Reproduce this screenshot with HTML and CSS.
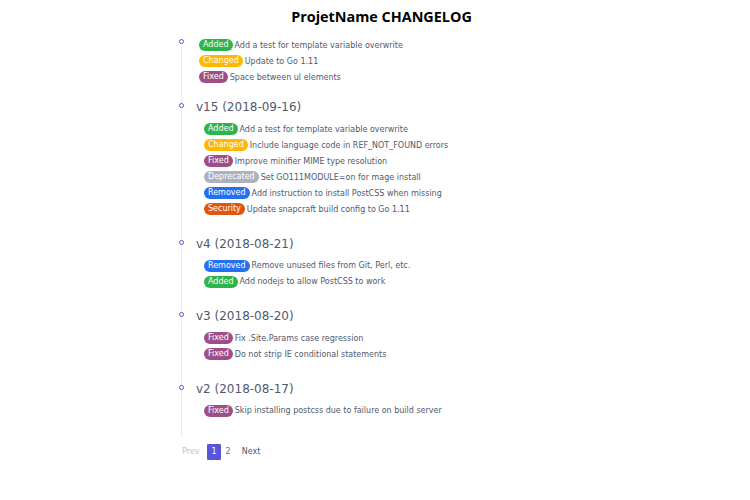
FILE: index.html
```html
<!DOCTYPE html>
<html lang="en">
<head>
<meta charset="utf-8">
<title>ProjetName CHANGELOG</title>
<link rel="stylesheet" href="styles.css">
</head>
<body>
<h1 class="title">ProjetName CHANGELOG</h1>
<div class="timeline">
  <section class="release">
    <ul class="changes changes-top">
      <li class="change"><span class="badge added">Added</span><span>Add a test for template variable overwrite</span></li>
      <li class="change"><span class="badge changed">Changed</span><span>Update to Go 1.11</span></li>
      <li class="change"><span class="badge fixed">Fixed</span><span>Space between ul elements</span></li>
    </ul>
  </section>
  <section class="release release-headed">
    <h2 class="version">v15 (2018-09-16)</h2>
    <ul class="changes">
      <li class="change"><span class="badge added">Added</span><span>Add a test for template variable overwrite</span></li>
      <li class="change"><span class="badge changed">Changed</span><span>Include language code in REF_NOT_FOUND errors</span></li>
      <li class="change"><span class="badge fixed">Fixed</span><span>Improve minifier MIME type resolution</span></li>
      <li class="change"><span class="badge deprecated">Deprecated</span><span>Set GO111MODULE=on for mage install</span></li>
      <li class="change"><span class="badge removed">Removed</span><span>Add instruction to install PostCSS when missing</span></li>
      <li class="change"><span class="badge security">Security</span><span>Update snapcraft build config to Go 1.11</span></li>
    </ul>
  </section>
  <section class="release release-headed">
    <h2 class="version">v4 (2018-08-21)</h2>
    <ul class="changes">
      <li class="change"><span class="badge removed">Removed</span><span>Remove unused files from Git, Perl, etc.</span></li>
      <li class="change"><span class="badge added">Added</span><span>Add nodejs to allow PostCSS to work</span></li>
    </ul>
  </section>
  <section class="release release-headed">
    <h2 class="version">v3 (2018-08-20)</h2>
    <ul class="changes">
      <li class="change"><span class="badge fixed">Fixed</span><span>Fix .Site.Params case regression</span></li>
      <li class="change"><span class="badge fixed">Fixed</span><span>Do not strip IE conditional statements</span></li>
    </ul>
  </section>
  <section class="release release-headed release-last">
    <h2 class="version">v2 (2018-08-17)</h2>
    <ul class="changes">
      <li class="change"><span class="badge fixed">Fixed</span><span>Skip installing postcss due to failure on build server</span></li>
    </ul>
  </section>
</div>
<nav class="pagination">
  <span class="page-link disabled">Prev</span>
  <a class="page-link active">1</a>
  <a class="page-link number">2</a>
  <a class="page-link next">Next</a>
</nav>
</body>
</html>
```
FILE: styles.css
```css
html, body {
  background: #ffffff;
}
body {
  margin: 0;
  font-family: "DejaVu Sans", sans-serif;
  font-size: 8px;
  color: #50596c;
}
.title {
  margin: 0;
  padding-top: 6px;
  padding-left: 13px;
  font-family: "Open Sans", sans-serif;
  font-weight: 700;
  font-size: 14.4px;
  line-height: 22px;
  text-align: center;
  color: #000000;
}
.timeline {
  position: relative;
  margin-top: 9px;
  margin-left: 181px;
  width: 420px;
  padding-bottom: 18px;
}
.timeline::before {
  content: "";
  position: absolute;
  left: 0;
  top: 9px;
  bottom: 0;
  width: 1px;
  background: #e7e9ed;
}
.release {
  position: relative;
  margin-bottom: 14px;
}
.release::before {
  content: "";
  position: absolute;
  left: -2px;
  top: 2px;
  width: 5px;
  height: 5px;
  box-sizing: border-box;
  border: 1.4px solid #5755d9;
  border-radius: 50%;
  background: #ffffff;
}
.release-headed {
  margin-bottom: 18.5px;
}
.release-headed::before {
  top: 4px;
}
.release-last {
  margin-bottom: 0;
}
.version {
  margin: 0 0 6px 0;
  padding-left: 15px;
  font-size: 12px;
  font-weight: 400;
  line-height: 16px;
  color: #50596c;
}
.changes {
  list-style: none;
  margin: 0;
  padding: 0 0 0 23px;
}
.changes-top {
  padding-left: 18px;
}
.change {
  display: flex;
  align-items: center;
  gap: 2px;
  height: 16px;
  white-space: nowrap;
}
.badge {
  display: inline-block;
  height: 12px;
  line-height: 12px;
  padding: 0 4px;
  border-radius: 6px;
  color: #ffffff;
}
.added { background: #2db54c; }
.changed { background: #ffb700; }
.fixed { background: #9e4f88; }
.deprecated { background: #acb1bd; }
.removed { background: #2470f2; }
.security { background: #e1560a; }
.pagination {
  display: flex;
  align-items: center;
  gap: 3px;
  margin: 7px 0 0 178px;
  line-height: 16px;
}
.page-link {
  display: block;
  padding: 0 4px;
  border-radius: 1px;
  color: #66758c;
  text-decoration: none;
}
.page-link.disabled {
  margin-right: 1px;
  color: #bcc3ce;
}
.page-link.active {
  background: #5755d9;
  color: #ffffff;
}
.page-link.number {
  margin-left: -2px;
}
.page-link.next {
  color: #50596c;
}
```
